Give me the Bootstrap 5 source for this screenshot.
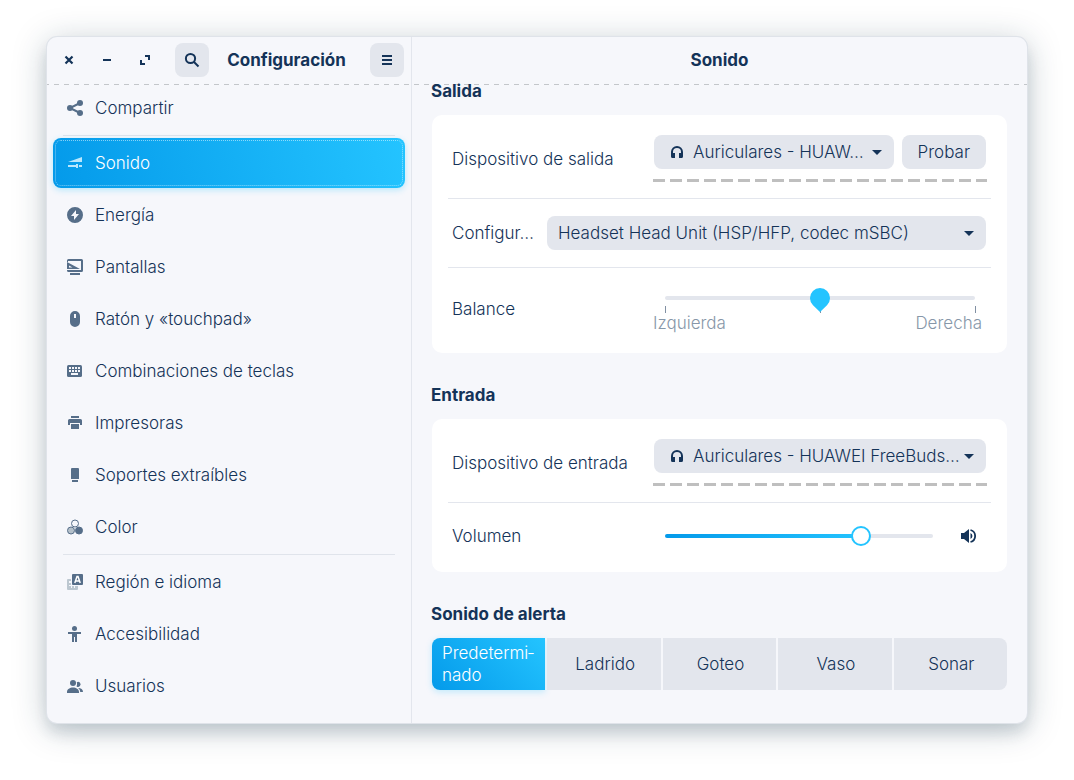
<!DOCTYPE html>
<html lang="es">
<head>
<meta charset="utf-8">
<meta name="viewport" content="width=device-width, initial-scale=1">
<title>Configuración – Sonido</title>
<link href="https://cdn.jsdelivr.net/npm/bootstrap@5.3.0/dist/css/bootstrap.min.css" rel="stylesheet">
<style>
  :root { --ink: #143358; --icon: #566e89; --fill: #e3e6ed; --pane: #f6f7fb; --grad: linear-gradient(75deg, #049aea, #24c4ff); }
  body { font-family: Inter, sans-serif; font-size: 17px; font-weight: 300; line-height: 22px; color: var(--ink); background: #fff; padding: 37px 47px 57px; min-height: 100vh; }
  .app-window { background: var(--pane); border-radius: 10px; box-shadow: 0 0 0 1px #dfe3e9, 0 10px 14px rgba(20,50,70,.12), 0 5px 34px rgba(20,50,70,.26); overflow: hidden; }
  .side-pane { flex: 0 0 365px; border-right: 1px solid #e3e6ed; }
  .pane-head { height: 48px; padding-bottom: 2px; background: repeating-linear-gradient(90deg, transparent 0 2px, #c3c6ca 2px 7px, transparent 7px 10px) bottom left / 100% 1px no-repeat; }
  .side-head { padding-left: 3px; padding-right: 7px; background-image: repeating-linear-gradient(90deg, #c3c6ca 0 2px, transparent 2px 7px, #c3c6ca 7px 10px); }
  .side-head h1 { padding-right: 6px; }
  .pane-head h1, .section-title { font-size: 17px; line-height: 22px; font-weight: 700; margin: 0; }
  .win-btn { width: 38px; height: 34px; padding: 0; border: 0; background: none; color: inherit; }
  .soft-btn { flex: none; width: 34px; height: 34px; padding: 0; border: 0; border-radius: 8px; background: var(--fill); color: var(--ink); }
  .find-btn { margin-left: 11px; }
  .soft-btn svg, .win-btn svg, .side-link svg { display: block; flex: none; }
  .side-list { margin-top: -2px; padding: 0 6px 12px; gap: 2px; }
  .side-link { height: 50px; padding: 0 14px; gap: 12px; border-radius: 8px; color: var(--ink); text-decoration: none; }
  .side-link svg { color: var(--icon); }
  .side-link.active { background: var(--grad); color: #fff; box-shadow: 0 2px 6px rgba(36,196,255,.3); outline: 1px dotted rgba(255,255,255,.5); outline-offset: -3px; }
  .side-link.active svg { color: #b9e7fd; }
  .side-rule { height: 1px; margin: 0 10px; background: #e0e4eb; }
  .main-body { padding: 0 20px 33px; }
  .section-title { margin: 0 -1px 13px; }
  .out-title { margin-top: -5px; }
  .panel { background: #fff; border-radius: 10px; margin-bottom: 31px; padding: 0 16px; }
  .panel-line { padding: 17px 5px 17px 4px; }
  .panel-line + .panel-line { border-top: 1px solid var(--fill); }
  .device-line { padding-top: 20px; padding-bottom: 16px; }
  .balance-line { padding-top: 20px; padding-bottom: 19px; }
  .volume-line { padding-top: 16px; padding-bottom: 19px; }
  .label-wide { flex: 0 0 202px; }
  .label-short { flex: 0 0 95px; white-space: nowrap; }
  .pick { height: 34px; min-width: 0; padding: 0 32px 0 11px; border: 0; border-radius: 8px; color: var(--ink); font-size: inherit; font-weight: inherit; line-height: 22px; text-overflow: ellipsis; background: var(--fill) url("data:image/svg+xml,%3Csvg xmlns='http://www.w3.org/2000/svg' width='10' height='5'%3E%3Cpath d='M0 0h10L5 5z' fill='%23143358'/%3E%3C/svg%3E") right 12px center / 10px 5px no-repeat; }
  .pick-icon { padding-left: 39px; padding-right: 24px; }
  .pick-glyph { left: 16px; top: 10px; pointer-events: none; }
  .probe { height: 34px; padding: 0 16px; border: 0; border-radius: 8px; background: var(--fill); color: var(--ink); font-weight: inherit; }
  .level { height: 3px; margin: 10px -1px 0; background: repeating-linear-gradient(90deg, #bfbfbf 0 12px, transparent 12px 17px); }
  .slide { -webkit-appearance: none; appearance: none; display: block; width: 100%; height: 20px; margin: 0; background: none; }
  .slide::-webkit-slider-runnable-track { height: 4px; border-radius: 2px; background: linear-gradient(90deg, #049aea, #24c4ff) left / var(--level, 0%) 100% no-repeat, var(--fill); }
  .slide::-webkit-slider-thumb { -webkit-appearance: none; width: 20px; height: 20px; margin-top: -8px; border: 2px solid #24c4ff; border-radius: 50%; background: #fff; }
  .slide-pin { position: relative; z-index: 1; }
  .slide-pin::-webkit-slider-thumb { height: 24px; border: 0; border-radius: 0; background: url("data:image/svg+xml,%3Csvg xmlns='http://www.w3.org/2000/svg' width='20' height='24'%3E%3Cpath d='M10 24L3 17.2A10 10 0 1 1 17 17.2z' fill='%2324c4ff'/%3E%3C/svg%3E") no-repeat; }
  .slide-wrap { margin: 0 11px; }
  .tick-row { margin: -2px -1px 0 0; }
  .tick { width: 1px; height: 7px; background: #8190a3; }
  .scale-text { margin: -1px 4px 0 -1px; color: #8797a9; }
  .volume-box { padding-left: 11px; gap: 19px; }
  .mute { flex: none; width: 34px; }
  .alert-set { gap: 2px; border-radius: 8px; }
  .alert-opt { flex: 1 1 0; min-width: 0; min-height: 52px; padding: 4px 8px 4px 10px; background: var(--fill); cursor: pointer; }
  .alert-opt:first-of-type { border-radius: 8px 0 0 8px; }
  .alert-opt:last-of-type { border-radius: 0 8px 8px 0; }
  .btn-check:checked + .alert-opt { background: linear-gradient(45deg, #049aea, #24c4ff); color: #fff; box-shadow: 0 2px 6px rgba(36,196,255,.25); }
</style>
</head>
<body class="d-flex">
<div class="app-window d-flex flex-grow-1">
  <aside class="side-pane">
    <header class="pane-head side-head d-flex align-items-center">
      <button class="win-btn d-flex align-items-center justify-content-center" aria-label="Cerrar"><svg width="16" height="16" viewBox="0 0 16 16"><path d="M4.500 4.500l7 7m0-7l-7 7" stroke="currentColor" stroke-width="2.200"/></svg></button>
      <button class="win-btn d-flex align-items-center justify-content-center" aria-label="Minimizar"><svg width="16" height="16" viewBox="0 0 16 16"><path d="M4 7h8v2H4z" fill="currentColor"/></svg></button>
      <button class="win-btn d-flex align-items-center justify-content-center" aria-label="Maximizar"><svg width="16" height="16" viewBox="0 0 16 16"><path d="M8 3h5v5h-2V5H8zM3 8h2v3h3v2H3z" fill="currentColor"/></svg></button>
      <button class="soft-btn find-btn d-flex align-items-center justify-content-center" aria-label="Buscar"><svg width="16" height="16" viewBox="0 0 16 16" fill="none" stroke="currentColor" stroke-width="2"><circle cx="6.500" cy="6.500" r="4.600"/><path d="M10 10l4.500 4.500"/></svg></button>
      <h1 class="flex-grow-1 text-center">Configuración</h1>
      <button class="soft-btn d-flex align-items-center justify-content-center" aria-label="Menú"><svg width="16" height="16" viewBox="0 0 16 16"><path d="M3 3h10v2H3zM3 7h10v2H3zM3 11h10v2H3z" fill="currentColor"/></svg></button>
    </header>
    <nav class="side-list d-flex flex-column">
      <a class="side-link d-flex align-items-center" href="#"><svg width="16" height="16" viewBox="0 0 16 16"><path d="M13 3L3 8l10 5" fill="none" stroke="currentColor" stroke-width="2"/><circle cx="3" cy="8" r="3" fill="currentColor"/><circle cx="13" cy="3" r="3" fill="currentColor"/><circle cx="13" cy="13" r="3" fill="currentColor"/></svg><span>Compartir</span></a>
      <div class="side-rule"></div>
      <a class="side-link d-flex align-items-center active" href="#"><svg width="16" height="16" viewBox="0 0 16 16"><path d="M1 7l14-5v5zM1 10h8v2H1zM9 9h2v4H9zM12 10h3v2h-3z" fill="currentColor"/></svg><span>Sonido</span></a>
      <a class="side-link d-flex align-items-center" href="#"><svg width="16" height="16" viewBox="0 0 16 16"><path fill-rule="evenodd" d="M8 0a8 8 0 1 0 0 16A8 8 0 0 0 8 0zm1 3v4h3l-5 6V9H4z" fill="currentColor"/></svg><span>Energía</span></a>
      <a class="side-link d-flex align-items-center" href="#"><svg width="16" height="16" viewBox="0 0 16 16" fill="currentColor"><path fill-rule="evenodd" d="M1.500 0h13A1.500 1.500 0 0 1 16 1.500v10a1.500 1.500 0 0 1-1.500 1.500h-13A1.500 1.500 0 0 1 0 11.500V11h14V2H1v1H0V1.500A1.500 1.500 0 0 1 1.500 0zM0 3l13 7H0zm2 3.500V8.500h3.500z"/><path d="M3 14h10v2H3z"/></svg><span>Pantallas</span></a>
      <a class="side-link d-flex align-items-center" href="#"><svg width="16" height="16" viewBox="0 0 16 16"><path fill-rule="evenodd" d="M8 0a5 5 0 0 0-5 5v6a5 5 0 0 0 10 0V5a5 5 0 0 0-5-5zm-1 3h2v4H7z" fill="currentColor"/></svg><span>Ratón y «touchpad»</span></a>
      <a class="side-link d-flex align-items-center" href="#"><svg width="16" height="16" viewBox="0 0 16 16"><rect y="2" width="15" height="12" rx="1.500" fill="currentColor"/><path d="M2 5h11M2 8h11" stroke="#f6f7fb" stroke-width="2" stroke-dasharray="2 1"/><path d="M4 10h7v2H4z" fill="#f6f7fb"/></svg><span>Combinaciones de teclas</span></a>
      <a class="side-link d-flex align-items-center" href="#"><svg width="16" height="16" viewBox="0 0 16 16"><path d="M4 1h8v2H4zM2.500 4h11A1.500 1.500 0 0 1 15 5.500V10h-2V8H3v2H1V5.500A1.500 1.500 0 0 1 2.500 4zM4 9h8v5H4z" fill="currentColor"/></svg><span>Impresoras</span></a>
      <a class="side-link d-flex align-items-center" href="#"><svg width="16" height="16" viewBox="0 0 16 16"><path d="M5 1h6a1 1 0 0 1 1 1v10H4V2a1 1 0 0 1 1-1zM5 13h6v2H5z" fill="currentColor"/></svg><span>Soportes extraíbles</span></a>
      <a class="side-link d-flex align-items-center" href="#"><svg width="16" height="16" viewBox="0 0 16 16" stroke="currentColor"><circle cx="8" cy="4.500" r="3.500" fill="#f6f7fb"/><circle cx="4" cy="11.500" r="3.500" fill="#b4c0ca"/><circle cx="12" cy="11.500" r="3.500" fill="currentColor"/></svg><span>Color</span></a>
      <div class="side-rule"></div>
      <a class="side-link d-flex align-items-center" href="#"><svg width="16" height="16" viewBox="0 0 16 16"><path d="M1 5h3v2H2v7h7v-2h2v3a1 1 0 0 1-1 1H1a1 1 0 0 1-1-1V6a1 1 0 0 1 1-1z" fill="#bcc7d0"/><path d="M3 9v4h7" fill="none" stroke="#bcc7d0" stroke-width="2" stroke-dasharray="2 1"/><rect x="5" width="11" height="11" rx="1" fill="currentColor"/><path d="M7.800 9l2.200-6.500h1L13.200 9M8.800 7h3.400" fill="none" stroke="#fff" stroke-width="1.500"/></svg><span>Región e idioma</span></a>
      <a class="side-link d-flex align-items-center" href="#"><svg width="16" height="16" viewBox="0 0 16 16"><circle cx="7.500" cy="2.500" r="2.500" fill="currentColor"/><path d="M1 6h13v2h-4v8H8v-5H7v5H5V8H1z" fill="currentColor"/></svg><span>Accesibilidad</span></a>
      <a class="side-link d-flex align-items-center" href="#"><svg width="16" height="16" viewBox="0 0 16 16" fill="currentColor"><circle cx="6" cy="5" r="3"/><path d="M0 15v-1c0-3 3-4.500 6-4.500s6 1.500 6 4.500v1zM9.800 4.200A2.500 2.500 0 1 1 9.600 8.400a5 5 0 0 0 .2-4.200zM13.200 14c0-2-.8-3-2.200-4 3 0 5 1.500 5 4z"/></svg><span>Usuarios</span></a>
    </nav>
  </aside>

  <main class="flex-grow-1 d-flex flex-column">
    <header class="pane-head d-flex align-items-center justify-content-center"><h1>Sonido</h1></header>
    <div class="main-body">
      <h2 class="section-title out-title">Salida</h2>
      <section class="panel">
        <div class="panel-line device-line d-flex align-items-center">
          <label class="label-wide" for="out-dev">Dispositivo de salida</label>
          <div class="flex-grow-1">
            <div class="d-flex gap-2">
              <div class="position-relative d-flex flex-grow-1">
                <select id="out-dev" class="form-select pick pick-icon"><option>Auriculares - HUAW…</option></select>
                <svg class="pick-glyph position-absolute" width="14" height="14" viewBox="0 0 14 14"><path d="M2 11V7a5 5 0 0 1 10 0v4" fill="none" stroke="#143358" stroke-width="2"/><path d="M1 8h4v5H2.500A1.500 1.500 0 0 1 1 11.500zM9 8h4v3.500a1.500 1.500 0 0 1-1.500 1.500H9z" fill="#143358"/></svg>
              </div>
              <button class="probe">Probar</button>
            </div>
            <div class="level" role="meter" aria-label="Nivel de salida" aria-valuenow="0"></div>
          </div>
        </div>
        <div class="panel-line d-flex align-items-center">
          <label class="label-short" for="out-conf" title="Configuración">Configur…</label>
          <select id="out-conf" class="form-select pick flex-grow-1"><option>Headset Head Unit (HSP/HFP, codec mSBC)</option></select>
        </div>
        <div class="panel-line balance-line d-flex align-items-center">
          <label class="label-wide pb-1" for="balance">Balance</label>
          <div class="flex-grow-1">
            <div class="slide-wrap">
              <input id="balance" class="slide slide-pin" type="range" min="-1" max="1" step="0.1" value="0">
              <div class="tick-row d-flex justify-content-between"><span class="tick"></span><span class="tick"></span><span class="tick"></span></div>
            </div>
            <div class="scale-text d-flex justify-content-between"><span>Izquierda</span><span>Derecha</span></div>
          </div>
        </div>
      </section>

      <h2 class="section-title">Entrada</h2>
      <section class="panel">
        <div class="panel-line device-line d-flex align-items-center">
          <label class="label-wide" for="in-dev">Dispositivo de entrada</label>
          <div class="flex-grow-1">
            <div class="position-relative d-flex">
              <select id="in-dev" class="form-select pick pick-icon"><option>Auriculares - HUAWEI FreeBuds…</option></select>
              <svg class="pick-glyph position-absolute" width="14" height="14" viewBox="0 0 14 14"><path d="M2 11V7a5 5 0 0 1 10 0v4" fill="none" stroke="#143358" stroke-width="2"/><path d="M1 8h4v5H2.500A1.500 1.500 0 0 1 1 11.500zM9 8h4v3.500a1.500 1.500 0 0 1-1.500 1.500H9z" fill="#143358"/></svg>
            </div>
            <div class="level" role="meter" aria-label="Nivel de entrada" aria-valuenow="0"></div>
          </div>
        </div>
        <div class="panel-line volume-line d-flex align-items-center">
          <label class="label-wide" for="volume">Volumen</label>
          <div class="volume-box flex-grow-1 d-flex align-items-center">
            <input id="volume" class="slide" type="range" min="0" max="100" value="75" style="--level: 75%">
            <button class="win-btn mute d-flex align-items-center justify-content-center" aria-label="Silenciar"><svg width="16" height="16" viewBox="0 0 16 16"><path d="M0 5h3l5-4v14l-5-4H0z" fill="currentColor"/><path d="M9.500 5a3.300 3.300 0 0 1 0 6z" fill="currentColor"/><path d="M9.500 2a6.200 6.200 0 0 1 0 12" fill="none" stroke="currentColor" stroke-width="1.800"/></svg></button>
          </div>
        </div>
      </section>

      <h2 class="section-title">Sonido de alerta</h2>
      <div class="alert-set d-flex" role="group" aria-label="Sonido de alerta">
        <input class="btn-check" type="radio" name="alert" id="a1" checked><label class="alert-opt d-flex align-items-center" for="a1"><span>Predetermi&shy;nado</span></label>
        <input class="btn-check" type="radio" name="alert" id="a2"><label class="alert-opt d-flex align-items-center justify-content-center" for="a2">Ladrido</label>
        <input class="btn-check" type="radio" name="alert" id="a3"><label class="alert-opt d-flex align-items-center justify-content-center" for="a3">Goteo</label>
        <input class="btn-check" type="radio" name="alert" id="a4"><label class="alert-opt d-flex align-items-center justify-content-center" for="a4">Vaso</label>
        <input class="btn-check" type="radio" name="alert" id="a5"><label class="alert-opt d-flex align-items-center justify-content-center" for="a5">Sonar</label>
      </div>
    </div>
  </main>
</div>
<script src="https://cdn.jsdelivr.net/npm/bootstrap@5.3.0/dist/js/bootstrap.bundle.min.js"></script>
</body>
</html>
